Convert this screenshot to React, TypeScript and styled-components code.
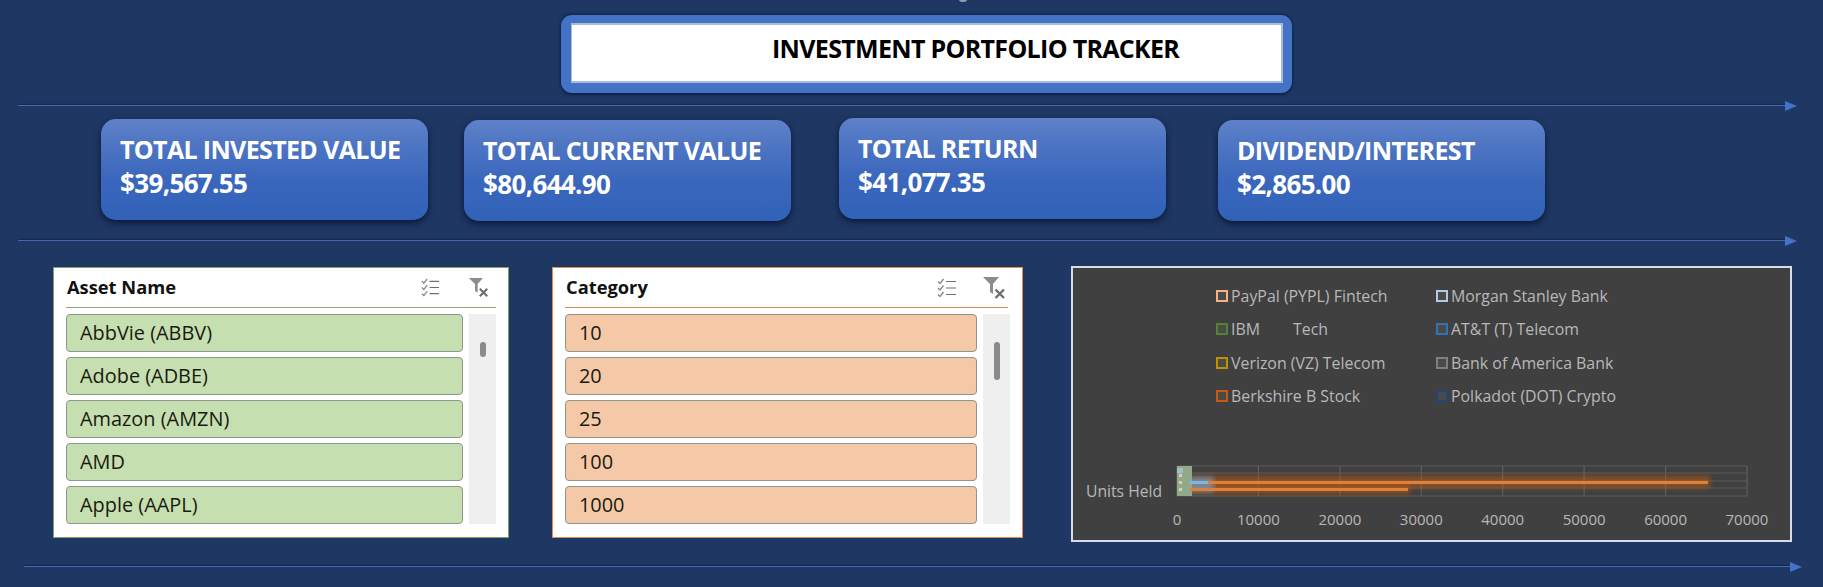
import React from "react";
import styled, { createGlobalStyle } from "styled-components";

const Global = createGlobalStyle`
  html, body { margin: 0; padding: 0; background: #1f3864; }
  body { font-family: "Open Sans", "Liberation Sans", sans-serif; width: 1823px; height: 587px; overflow: hidden; }
`;

const Page = styled.div`
  position: relative;
  width: 1823px;
  height: 587px;
  background: #1e3763;
  padding-top: 15px;
  box-sizing: border-box;
`;

const TopNotch = styled.div`
  position: absolute;
  left: 959px;
  top: -3px;
  width: 8px;
  height: 5px;
  border-radius: 50%;
  background: #8d9ab0;
`;

const TitleFrame = styled.div`
  width: 731px;
  height: 78px;
  margin-left: 561px;
  box-sizing: border-box;
  padding: 8px 9px 10px 10px;
  background: #4472c4;
  border-radius: 11px;
  box-shadow: 0 -1px 3px rgba(10, 25, 60, 0.7), 0 2px 3px rgba(10, 25, 60, 0.7);
`;

const TitleBox = styled.div`
  height: 100%;
  box-sizing: border-box;
  background: #fff;
  border: 2px solid #a9bad8;
  border-left-width: 1px;
  border-right-width: 2px;
  display: flex;
  align-items: center;
  padding-left: 200px;
  padding-bottom: 11px;
`;

const TitleText = styled.h1`
  margin: 0;
  font-size: 25px;
  line-height: 30px;
  font-weight: 700;
  letter-spacing: -0.68px;
  color: #000;
  white-space: nowrap;
`;

const Divider = styled.div<{ $top: number; $left: number; $width: number }>`
  display: flex;
  align-items: center;
  height: 11px;
  margin-top: ${(p) => p.$top}px;
  margin-left: ${(p) => p.$left}px;
  width: ${(p) => p.$width}px;
`;

const DividerLine = styled.div`
  flex: 1;
  height: 1px;
  background: #4468ac;
  box-shadow: 0 -1px 1px rgba(15, 30, 65, 0.6);
`;

const DividerHead = styled.div`
  width: 0;
  height: 0;
  border-left: 12px solid #4472c4;
  border-top: 5px solid transparent;
  border-bottom: 5px solid transparent;
`;

const CardRow = styled.div`
  display: flex;
  align-items: flex-start;
  height: 103px;
  margin-top: 7px;
`;

const Card = styled.div<{ $left: number; $top: number }>`
  width: 327px;
  height: 101px;
  box-sizing: border-box;
  margin-left: ${(p) => p.$left}px;
  margin-top: ${(p) => p.$top}px;
  padding: 13px 0 0 19px;
  border-radius: 15px;
  background: linear-gradient(180deg, #5f81c9 0%, #4b73c2 30%, #3a67bd 60%, #3162b8 100%);
  box-shadow: 0 3px 6px rgba(8, 18, 45, 0.8);
  color: #fff;
  font-weight: 700;
  letter-spacing: -0.65px;
  line-height: 34px;
  white-space: nowrap;
`;

const CardLabel = styled.div`
  font-size: 25px;
`;

const CardValue = styled.div`
  font-size: 26px;
`;

const PanelRow = styled.div`
  display: flex;
  align-items: flex-start;
  margin-top: 20px;
  height: 276px;
`;

const Slicer = styled.div<{ $left: number; $width: number; $accent: string }>`
  width: ${(p) => p.$width}px;
  height: 271px;
  margin-top: 1px;
  margin-left: ${(p) => p.$left}px;
  box-sizing: border-box;
  padding: 0 12px 0 12px;
  background: #fff;
  border: 1px solid ${(p) => p.$accent};
`;

const SlicerHeader = styled.div<{ $accent: string; $inset: number }>`
  height: 40px;
  box-sizing: border-box;
  display: flex;
  align-items: center;
  padding-left: 1px;
  margin-right: ${(p) => p.$inset}px;
  border-bottom: 1px solid ${(p) => p.$accent};
`;

const SlicerTitle = styled.div`
  flex: 1;
  font-size: 18.3px;
  font-weight: 700;
  color: #111;
  padding-bottom: 2px;
`;

const HeaderIcons = styled.div<{ $gap: number; $right: number }>`
  display: flex;
  align-items: center;
  gap: ${(p) => p.$gap}px;
  margin-right: ${(p) => p.$right}px;
`;

const SlicerBody = styled.div`
  display: flex;
  gap: 6px;
  margin-top: 6px;
`;

const ItemList = styled.div`
  flex: 1;
  display: flex;
  flex-direction: column;
  gap: 5px;
`;

const Item = styled.div<{ $fill: string }>`
  height: 38px;
  box-sizing: border-box;
  padding: 0 0 2px 13px;
  display: flex;
  align-items: center;
  background: ${(p) => p.$fill};
  border: 1px solid #8f978c;
  border-radius: 4px;
  font-size: 19.9px;
  color: #1a1a10;
`;

const Track = styled.div`
  width: 27px;
  height: 210px;
  background: #efefef;
  display: flex;
  justify-content: center;
`;

const Thumb = styled.div<{ $h: number }>`
  width: 6px;
  height: ${(p) => p.$h}px;
  margin-top: 28px;
  border-radius: 3px;
  background: #8b8b8b;
`;

const ChartPanel = styled.div`
  width: 721px;
  height: 276px;
  margin-left: 48px;
  box-sizing: border-box;
  background: #404040;
  border: 2px solid #d5dde8;
  display: flex;
  flex-direction: column;
`;

const Legend = styled.div`
  display: grid;
  grid-template-columns: 220px 1fr;
  grid-auto-rows: 33.5px;
  padding: 11px 0 0 143px;
  height: 134px;
  flex: none;
`;

const LegendItem = styled.div`
  display: flex;
  align-items: center;
  gap: 3px;
  font-size: 15.9px;
  color: #b8b8b8;
  white-space: pre;
`;

const Swatch = styled.span<{ $color: string }>`
  width: 12px;
  height: 12px;
  box-sizing: border-box;
  border: 2px solid ${(p) => p.$color};
  background: #4a4a46;
  flex: none;
`;

const PlotSvg = styled.svg`
  display: block;
  flex: 1;
  width: 717px;
  height: 127px;
`;

const ChecklistIcon = ({ size }: { size: number }) => (
  <svg width={size} height={size} viewBox="0 0 20 20" fill="none" stroke="#8a8a8a">
    <path d="M1 3.5l2 2 3.5-4.5M1 10l2 2 3.5-4.5M1 16.5l2 2 3.5-4.5" strokeWidth="1.4" />
    <path d="M9 3.5h10M9 10h10M9 16.5h10" stroke="#6f6f6f" strokeWidth="1.2" />
  </svg>
);

const FilterClearIcon = ({ size }: { size: number }) => (
  <svg width={size} height={size} viewBox="0 0 24 24" fill="none">
    <path d="M1 1h16l-6 7v10l-3-2V8z" fill="#8c8c8c" />
    <path d="M13.5 13.5l8.5 8.5M22 13.5L13.5 22" stroke="#6e6e6e" strokeWidth="2.4" />
  </svg>
);

const assets = ["AbbVie (ABBV)", "Adobe (ADBE)", "Amazon (AMZN)", "AMD", "Apple (AAPL)"];
const categories = ["10", "20", "25", "100", "1000"];
const cards = [
  { label: "TOTAL INVESTED VALUE", value: "$39,567.55", left: 101, top: 1 },
  { label: "TOTAL CURRENT VALUE", value: "$80,644.90", left: 36, top: 2 },
  { label: "TOTAL RETURN", value: "$41,077.35", left: 48, top: 0 },
  { label: "DIVIDEND/INTEREST", value: "$2,865.00", left: 52, top: 2 },
];
const legend = [
  ["#f4b183", "PayPal (PYPL) Fintech"],
  ["#b4c7e7", "Morgan Stanley Bank"],
  ["#548235", "IBM        Tech"],
  ["#2e75b6", "AT&T (T) Telecom"],
  ["#bf9000", "Verizon (VZ) Telecom"],
  ["#7f7f7f", "Bank of America Bank"],
  ["#c55a11", "Berkshire B Stock"],
  ["#264478", "Polkadot (DOT) Crypto"],
];
const ticks = [0, 10000, 20000, 30000, 40000, 50000, 60000, 70000];
const tickX = (v: number) => 1177 + (v / 70000) * 570;

const Plot = () => (
  <PlotSvg viewBox="1073 413 717 127">
    <defs>
      <filter id="glow" x="-5%" y="-300%" width="110%" height="700%">
        <feGaussianBlur stdDeviation="2.6" />
      </filter>
    </defs>
    {ticks.map((t) => (
      <line key={t} x1={tickX(t)} x2={tickX(t)} y1="466" y2="496" stroke="#5f5f5f" strokeWidth="1.2" />
    ))}
    {[466, 473, 481, 488, 496].map((y) => (
      <line key={y} x1="1177" x2="1747" y1={y} y2={y} stroke="#5b5b5b" strokeWidth="1" />
    ))}
    <rect x="1190" y="476" width="520" height="12" fill="#c55a11" opacity="0.55" filter="url(#glow)" />
    <rect x="1190" y="484" width="220" height="10" fill="#c55a11" opacity="0.5" filter="url(#glow)" />
    <rect x="1188" y="477" width="26" height="15" fill="#6fa8dc" opacity="0.6" filter="url(#glow)" />
    <rect x="1177" y="466" width="15" height="30" fill="#8fa98a" />
    <rect x="1177" y="468" width="6" height="5" fill="#9fc0c8" />
    <rect x="1179" y="474" width="3" height="3" fill="#e8c9a8" />
    <rect x="1179" y="481" width="3" height="3" fill="#e8c9a8" />
    <rect x="1179" y="488" width="3" height="3" fill="#e8c9a8" />
    <rect x="1190" y="481" width="518" height="3" fill="#e0813a" />
    <rect x="1190" y="488" width="218" height="3" fill="#e0813a" />
    <rect x="1190" y="481" width="18" height="3" fill="#7db6e0" />
    <text x="1086" y="497" fontSize="15.7" fill="#b8b8b8" fontFamily="Open Sans, sans-serif">Units Held</text>
    {ticks.map((t) => (
      <text key={t} x={tickX(t)} y="524.5" fontSize="15" fill="#b8b8b8" textAnchor="middle" fontFamily="Open Sans, sans-serif">
        {t}
      </text>
    ))}
  </PlotSvg>
);

const Arrow = ({ top, left, width }: { top: number; left: number; width: number }) => (
  <Divider $top={top} $left={left} $width={width}>
    <DividerLine />
    <DividerHead />
  </Divider>
);

export default function App() {
  return (
    <Page>
      <Global />
      <TopNotch />
      <TitleFrame>
        <TitleBox>
          <TitleText>INVESTMENT PORTFOLIO TRACKER</TitleText>
        </TitleBox>
      </TitleFrame>
      <Arrow top={7} left={18} width={1779} />
      <CardRow>
        {cards.map((c) => (
          <Card key={c.label} $left={c.left} $top={c.top}>
            <CardLabel>{c.label}</CardLabel>
            <CardValue>{c.value}</CardValue>
          </Card>
        ))}
      </CardRow>
      <Arrow top={14} left={18} width={1779} />
      <PanelRow>
        <Slicer $left={53} $width={456} $accent="#7f9f63">
          <SlicerHeader $accent="#8fa877" $inset={0}>
            <SlicerTitle>Asset Name</SlicerTitle>
            <HeaderIcons $gap={28} $right={7}>
              <ChecklistIcon size={19} />
              <FilterClearIcon size={21} />
            </HeaderIcons>
          </SlicerHeader>
          <SlicerBody>
            <ItemList>
              {assets.map((a) => (
                <Item key={a} $fill="#c6dfb1">{a}</Item>
              ))}
            </ItemList>
            <Track>
              <Thumb $h={15} />
            </Track>
          </SlicerBody>
        </Slicer>
        <Slicer $left={43} $width={471} $accent="#e08a4c">
          <SlicerHeader $accent="#d98a55" $inset={2}>
            <SlicerTitle>Category</SlicerTitle>
            <HeaderIcons $gap={25} $right={2}>
              <ChecklistIcon size={20} />
              <FilterClearIcon size={24} />
            </HeaderIcons>
          </SlicerHeader>
          <SlicerBody>
            <ItemList>
              {categories.map((a) => (
                <Item key={a} $fill="#f5c9a8">{a}</Item>
              ))}
            </ItemList>
            <Track>
              <Thumb $h={38} />
            </Track>
          </SlicerBody>
        </Slicer>
        <ChartPanel>
          <Legend>
            {legend.map(([color, name]) => (
              <LegendItem key={name}>
                <Swatch $color={color} />
                {name}
              </LegendItem>
            ))}
          </Legend>
          <Plot />
        </ChartPanel>
      </PanelRow>
      <Arrow top={19} left={24} width={1778} />
    </Page>
  );
}
